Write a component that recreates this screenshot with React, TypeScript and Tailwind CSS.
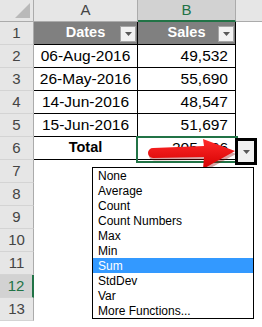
const FONT = { fontFamily: '"Liberation Sans", Arial, sans-serif' };

const TABLE = [
  { a: "Dates", b: "Sales", kind: "head" },
  { a: "06-Aug-2016", b: "49,532", kind: "data" },
  { a: "26-May-2016", b: "55,690", kind: "data" },
  { a: "14-Jun-2016", b: "48,547", kind: "data" },
  { a: "15-Jun-2016", b: "51,697", kind: "data" },
  { a: "Total", b: "205,466", kind: "total" },
];

const MENU = ["None", "Average", "Count", "Count Numbers", "Max", "Min", "Sum", "StdDev", "Var", "More Functions..."];

function FilterButton() {
  return (
    <div className="absolute right-[1px] top-[4px] flex h-[16px] w-[16px] items-center justify-center border border-[#a6a6a6] bg-[#f2f2f2]">
      <svg width="7" height="4" viewBox="0 0 7 4">
        <path d="M0 0h7L3.5 4z" fill="#595959" />
      </svg>
    </div>
  );
}

function RowHeader({ n }: { n: number }) {
  const sel = n === 12;
  return (
    <div
      className={`flex w-[34px] shrink-0 items-center justify-center border-b border-[#d4d4d4] text-[15px] ${
        sel ? "border-r-2 border-r-[#217346] bg-[#d2d2d2] text-[#217346]" : "border-r border-r-[#ababab] bg-[#e6e6e6] text-[#444]"
      }`}
    >
      {n}
    </div>
  );
}

export default function App() {
  return (
    <div className="relative h-[327px] w-[262px] overflow-hidden bg-white text-black" style={FONT}>
      {/* column headers */}
      <div className="flex h-[22px]">
        <div className="relative w-[34px] shrink-0 border-b border-r border-[#ababab] bg-[#e6e6e6]">
          <svg className="absolute left-[15px] top-[3px]" width="15" height="15" viewBox="0 0 15 15">
            <path d="M15 0V15H0z" fill="#b9b9b9" />
          </svg>
        </div>
        <div className="flex w-[104px] shrink-0 items-center justify-center border-b border-r border-[#ababab] bg-[#e6e6e6] text-[15px] text-[#444]">
          A
        </div>
        <div className="flex w-[98px] shrink-0 items-center justify-center border-b-2 border-r border-b-[#217346] border-r-[#ababab] bg-[#d2d2d2] text-[15px] text-[#217346]">
          B
        </div>
        <div className="flex-1 border-b border-[#ababab] bg-[#e6e6e6]" />
      </div>

      {/* rows */}
      {Array.from({ length: 13 }, (_, i) => {
        const row = TABLE[i];
        return (
          <div key={i} className="flex h-[23px]">
            <RowHeader n={i + 1} />
            {row ? (
              <>
                <div
                  className={`relative flex w-[104px] shrink-0 items-center justify-center border-b border-r border-black ${
                    row.kind === "head"
                      ? "bg-[#808080] text-[14.5px] font-bold text-white"
                      : row.kind === "total"
                        ? "text-[14.5px] font-bold"
                        : "text-[15.5px]"
                  }`}
                >
                  {row.a}
                  {row.kind === "head" && <FilterButton />}
                </div>
                <div
                  className={`relative flex w-[98px] shrink-0 items-center border-b border-r border-black ${
                    row.kind === "head"
                      ? "justify-center bg-[#808080] text-[14.5px] font-bold text-white"
                      : "justify-end pr-[7px] text-[15.5px]"
                  }`}
                >
                  {row.b}
                  {row.kind === "head" && <FilterButton />}
                </div>
              </>
            ) : (
              <div className="w-[202px] shrink-0" />
            )}
            <div className="flex-1" />
          </div>
        );
      })}

      {/* selected cell B6 */}
      <div className="absolute left-[136px] top-[136px] h-[27px] w-[102px] border-2 border-[#217346]" />

      {/* red arrow */}
      <svg className="absolute left-[144px] top-[136px]" width="96" height="36" viewBox="0 0 96 36">
        <defs>
          <linearGradient id="red" x1="0" y1="0" x2="0" y2="1">
            <stop offset="0" stopColor="#ff2a2a" />
            <stop offset="1" stopColor="#d40000" />
          </linearGradient>
        </defs>
        <path d="M9 12.5L60 10.5L59 3L91 16L60 33L60 22L9 22.5A5 5 0 0 1 9 12.5z" fill="#8a0000" opacity="0.35" transform="translate(1 2)" />
        <path d="M9 12L60 10L59 3L91 15L59 33L60 21L9 22A5 5 0 0 1 9 12z" fill="url(#red)" />
      </svg>

      {/* total dropdown button */}
      <div className="absolute left-[235px] top-[138px] flex h-[27px] w-[22px] items-center justify-center border-[3px] border-black bg-[#f0f0f0]">
        <svg width="7" height="4" viewBox="0 0 7 4">
          <path d="M0 0h7L3.5 4z" fill="#595959" />
        </svg>
      </div>

      {/* function list */}
      <div className="absolute left-[92px] top-[167px] w-[162px] border border-black bg-white text-[12px]">
        {MENU.map((m) => (
          <div
            key={m}
            className={`flex h-[15px] items-center pl-[5px] leading-none ${m === "Sum" ? "bg-[#3399ff] text-white" : "text-black"}`}
          >
            {m}
          </div>
        ))}
      </div>
    </div>
  );
}
